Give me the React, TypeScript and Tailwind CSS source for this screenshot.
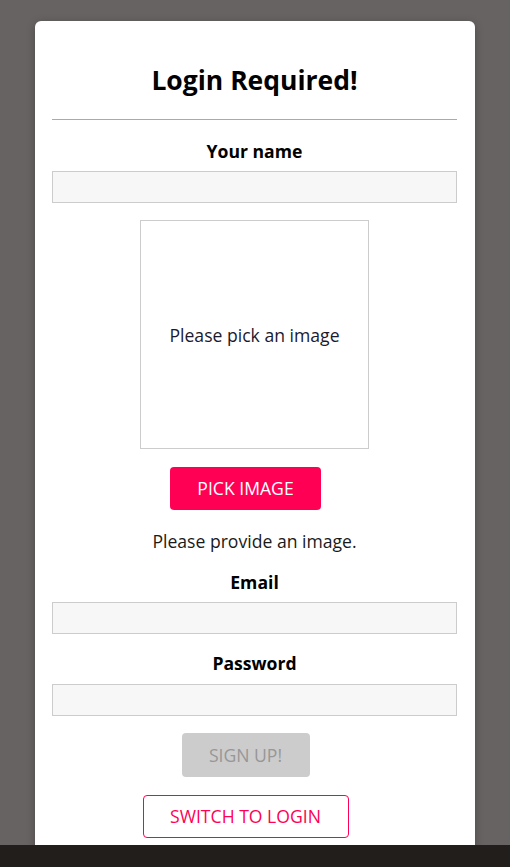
import React from 'react';

const font = { fontFamily: '"Open Sans", "Noto Sans", sans-serif' };

function Field({ label, type, mt, mb = 'mb-[8px]' }: { label: string; type: string; mt: string; mb?: string }) {
  return (
    <div className={`${mt} flex flex-col`}>
      <label className={`block text-center text-[17.6px] font-bold leading-[24px] text-black ${mb}`}>{label}</label>
      <input
        type={type}
        className="block h-[32px] w-full border border-[#cccccc] bg-[#f7f7f7] px-1 outline-none"
      />
    </div>
  );
}

export default function App() {
  return (
    <div className="flex h-[867px] flex-col overflow-hidden" style={font}>
      <div className="h-[845px] overflow-hidden bg-[#676362] px-[35px] pt-[21px]">
        <div className="rounded-[6px] bg-white pl-[17px] pr-[18px] pt-[43px] pb-8 shadow-[0_2px_8px_rgba(0,0,0,0.26)]">
          <h2 className="text-center text-[26.5px] font-bold leading-[32px] text-black">Login Required!</h2>
          <hr className="mt-[23px] border-0 border-t border-[#aaaaaa]" />

          <Field label="Your name" type="text" mt="mt-[19px]" />

          <div className="mt-[17px] flex flex-col items-center">
            <div className="flex h-[229px] w-[229px] items-center justify-center border border-[#cccccc] pt-[2px] text-[17.6px] text-[#1a1a2e]">
              Please pick an image
            </div>
            <button className="mt-[18px] mr-[18px] h-[43px] w-[151px] rounded-[4px] bg-[#ff0055] text-[17.6px] text-white">
              PICK IMAGE
            </button>
            <p className="mt-[19px] text-[17.6px] leading-[24px] text-[#1a1a1a]">Please provide an image.</p>
          </div>

          <Field label="Email" type="email" mt="mt-[17px]" />
          <Field label="Password" type="password" mt="mt-[17px]" mb="mb-[9px]" />

          <div className="mt-[17px] flex flex-col items-center">
            <button className="mr-[18px] h-[44px] w-[128px] rounded-[4px] bg-[#cccccc] text-[17.6px] text-[#979797]">
              SIGN UP!
            </button>
            <button className="mt-[18px] mr-[18px] h-[43px] w-[206px] rounded-[4px] border border-[#ff0055] bg-white text-[17.6px] text-[#ff0055]">
              SWITCH TO LOGIN
            </button>
          </div>
        </div>
      </div>
      <div className="h-[22px] bg-[#211e1c]" />
    </div>
  );
}
